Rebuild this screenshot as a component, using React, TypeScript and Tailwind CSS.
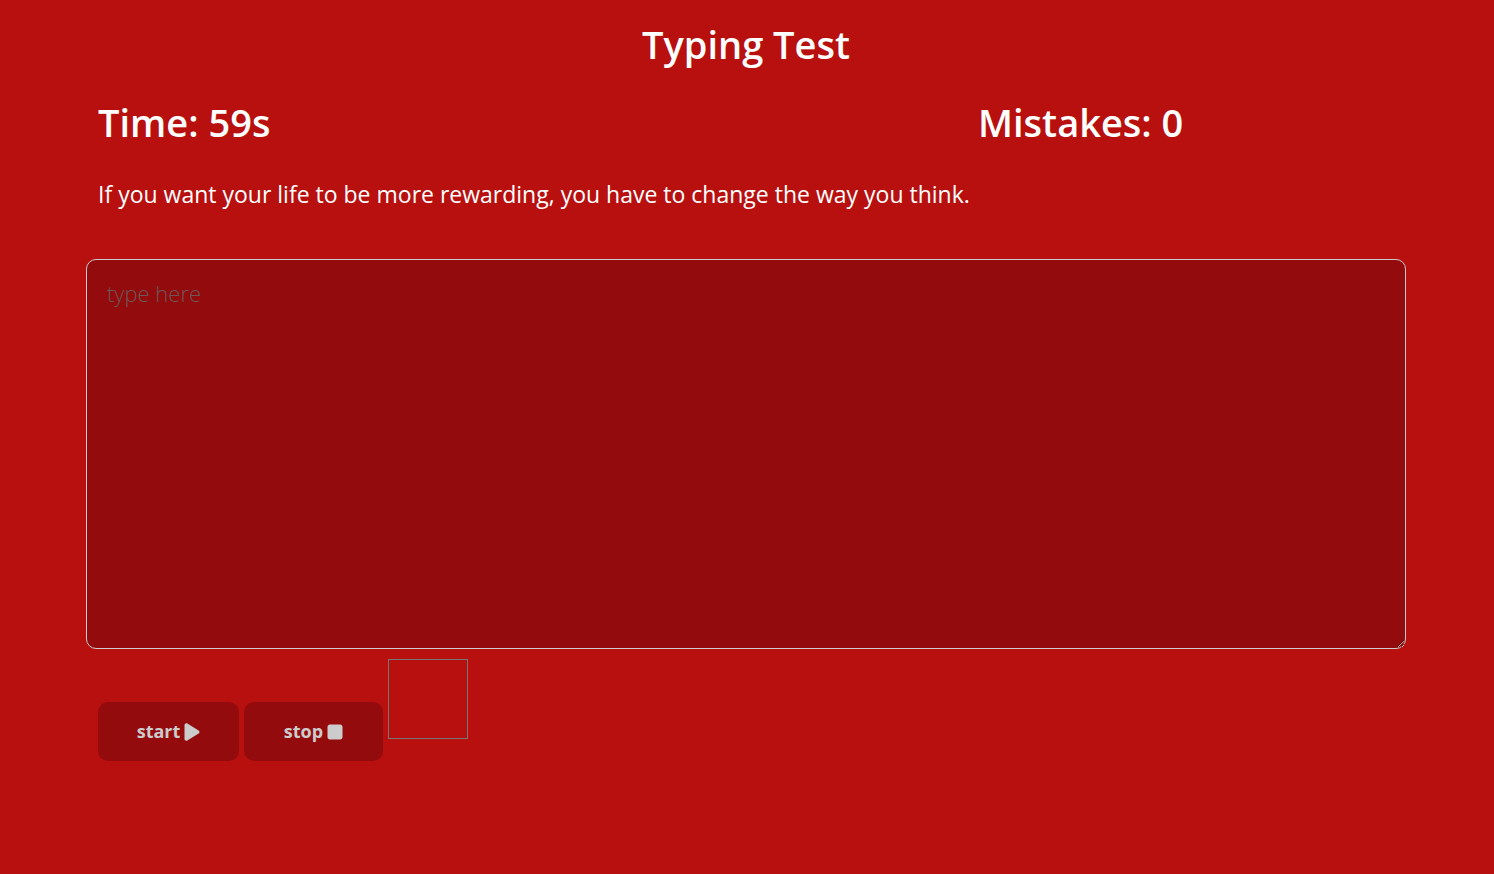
import React from "react";
import { FaPlay, FaStop } from "react-icons/fa6";

const buttonClass =
  "flex h-[59px] items-center justify-center gap-1 rounded-[10px] bg-[#930b0c] text-[18px] font-bold text-[#cccccc]";

export default function App() {
  return (
    <main className="min-h-screen bg-[#b8100f] pt-4 pr-0.5 font-['Open_Sans','Noto_Sans',sans-serif] text-white">
      <div className="mx-auto max-w-[1320px]">
        <h1 className="text-center text-[38px] leading-[56px] font-semibold">Typing Test</h1>
        <div className="mt-5 grid grid-cols-3 text-[38px] leading-[60px] font-semibold">
          <h2 className="col-span-2 px-3">Time: 59s</h2>
          <h2 className="px-3">Mistakes: 0</h2>
        </div>
        <label htmlFor="typing" className="mt-6 block px-3 text-[23px] leading-9">
          If you want your life to be more rewarding, you have to change the way you think.
        </label>
        <textarea
          id="typing"
          placeholder="type here"
          className="mt-[47px] block h-[390px] w-full rounded-[10px] border border-[#cccccc] bg-[#930b0c] px-5 py-4 text-[22px] leading-[34px] font-light placeholder:text-[#6c5757]"
        />
        <div className="mt-[10px] flex items-end gap-[5px] px-3">
          <button type="button" className={buttonClass + " w-[141px]"}>
            start <FaPlay className="h-5 w-4" />
          </button>
          <button type="button" className={buttonClass + " w-[139px]"}>
            stop <FaStop className="h-5 w-4" />
          </button>
          <div className="mb-[22px] size-20 border border-[#767676]" />
        </div>
      </div>
    </main>
  );
}
